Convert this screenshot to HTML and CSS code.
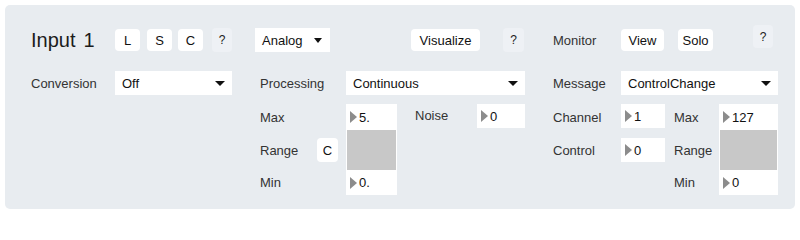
FILE: index.html
```html
<!DOCTYPE html>
<html>
<head>
<meta charset="utf-8">
<link rel="stylesheet" href="styles.css">
</head>
<body>
<div class="panel">
  <div class="sec sec-a">
    <div class="head">
      <div class="title"><span>Input</span><span class="title-num">1</span></div>
      <div class="btn btn-l">L</div>
      <div class="btn btn-s">S</div>
      <div class="btn btn-c">C</div>
      <div class="help help-a">?</div>
    </div>
    <div class="line line-a">
      <div class="label">Conversion</div>
      <div class="dd"><span>Off</span><i class="arrow"></i></div>
    </div>
  </div>

  <div class="sec sec-b">
    <div class="head head-b">
      <div class="dd dd-analog"><span>Analog</span><i class="arrow"></i></div>
      <div class="spacer"></div>
      <div class="btn btn-vis">Visualize</div>
      <div class="help help-b">?</div>
    </div>
    <div class="line line-b">
      <div class="label pl5">Processing</div>
      <div class="dd"><span>Continuous</span><i class="arrow"></i></div>
    </div>
    <div class="params params-b">
      <div class="label pl5 r3 c1">Max</div>
      <div class="label pl5 r4 c1">Range</div>
      <div class="label pl5 r5 c1">Min</div>
      <div class="btn btn-rc r4 c2">C</div>
      <div class="range c3">
        <div class="num">5.</div>
        <div class="gray"></div>
        <div class="num">0.</div>
      </div>
      <div class="label noise r3 c4">Noise</div>
      <div class="num box r3 c5">0</div>
    </div>
  </div>

  <div class="sec sec-c">
    <div class="head">
      <div class="label mon">Monitor</div>
      <div class="btn btn-view">View</div>
      <div class="btn btn-solo">Solo</div>
      <div class="help help-c">?</div>
    </div>
    <div class="line line-c">
      <div class="label">Message</div>
      <div class="dd"><span>ControlChange</span><i class="arrow"></i></div>
    </div>
    <div class="params params-c">
      <div class="label r3 c1">Channel</div>
      <div class="num box r3 c2">1</div>
      <div class="label r4 c1">Control</div>
      <div class="num box mid r4 c2">0</div>
      <div class="label pl9 r3 c3">Max</div>
      <div class="label pl9 r4 c3">Range</div>
      <div class="label pl9 r5 c3">Min</div>
      <div class="range c4">
        <div class="num">127</div>
        <div class="gray"></div>
        <div class="num">0</div>
      </div>
    </div>
  </div>
</div>
</body>
</html>
```

FILE: styles.css
```css
html, body {
  margin: 0;
  padding: 0;
  background: #ffffff;
}

body {
  font-family: "Liberation Sans", Arial, Helvetica, sans-serif;
  font-size: 13px;
  color: #222;
}

.panel {
  margin: 5px;
  width: 790px;
  height: 204px;
  box-sizing: border-box;
  padding: 23px 0 0 26px;
  background: #e8ecf0;
  border-radius: 5px;
  display: flex;
  align-items: flex-start;
}

.sec {
  display: flex;
  flex-direction: column;
}

.sec-a { width: 224px; }
.sec-b { width: 298px; }
.sec-c { width: 226px; }

.head {
  display: flex;
  align-items: center;
  height: 24px;
}

.head-b { width: 269px; }

.title {
  width: 84px;
  font-size: 20px;
  color: #1c1c1c;
  display: flex;
  align-items: center;
  height: 24px;
}

.title-num {
  margin-left: 8px;
}

.btn {
  background: #ffffff;
  border-radius: 4px;
  height: 22px;
  display: flex;
  align-items: center;
  justify-content: center;
  color: #111;
  box-sizing: border-box;
}

.btn-l { width: 25px; }
.btn-s { width: 25px; margin-left: 7px; }
.btn-c { width: 25px; margin-left: 6px; }

.help {
  background: #eef1f5;
  border-radius: 4px;
  width: 20px;
  height: 24px;
  display: flex;
  align-items: center;
  justify-content: center;
  color: #222;
  font-size: 12px;
}

.help-a { margin-left: 9px; }

.line {
  margin-top: 19px;
  display: grid;
  align-items: center;
  height: 24px;
}

.line-a { grid-template-columns: 84px 117px; }
.line-b { grid-template-columns: 91px 179px; }
.line-c { grid-template-columns: 68px 157px; }

.label {
  color: #333;
  white-space: nowrap;
}

.pl5 { padding-left: 5px; }
.pl9 { padding-left: 9px; }

.dd {
  background: #ffffff;
  height: 24px;
  display: flex;
  align-items: center;
  justify-content: space-between;
  padding-left: 7px;
  box-sizing: border-box;
  color: #111;
}

.arrow {
  width: 0;
  height: 0;
  border-left: 5px solid transparent;
  border-right: 5px solid transparent;
  border-top: 5px solid #111;
  margin-right: 7px;
}

.dd-analog {
  width: 75px;
}

.dd-analog .arrow {
  border-left-width: 4px;
  border-right-width: 4px;
  margin-right: 8px;
}

.spacer { flex: 1; }

.btn-vis { width: 69px; }
.help-b { margin-left: 23px; width: 21px; }

.mon { width: 68px; }
.btn-view { width: 43px; }
.btn-solo { width: 35px; margin-left: 14px; }
.help-c {
  margin-left: 40px;
  height: 23px;
  align-self: flex-start;
  margin-top: -3px;
}

.params {
  margin-top: 9px;
  display: grid;
  grid-template-rows: 26px 40px 25px;
  align-items: center;
}

.params-b { grid-template-columns: 62px 29px 51px 80px 48px; }
.params-c { grid-template-columns: 68px 44px 54px 59px; }

.r3 { grid-row: 1; }
.r4 { grid-row: 2; }
.r5 { grid-row: 3; }
.c1 { grid-column: 1; }
.c2 { grid-column: 2; }
.c3 { grid-column: 3; }
.c4 { grid-column: 4; }
.c5 { grid-column: 5; }

.noise { padding-left: 18px; align-self: start; margin-top: 4px; }

.btn-rc {
  width: 21px;
  height: 24px;
  justify-self: start;
}

.num {
  display: flex;
  align-items: center;
  padding-left: 4px;
  color: #111;
}

.num::before {
  content: "";
  width: 0;
  height: 0;
  border-left: 7px solid #8c8c8c;
  border-top: 6px solid transparent;
  border-bottom: 6px solid transparent;
  margin-right: 2px;
}

.box {
  background: #ffffff;
  height: 24px;
  align-self: start;
}

.box.mid {
  align-self: center;
}

.range {
  grid-row: 1 / 4;
  align-self: stretch;
  background: #ffffff;
  display: grid;
  grid-template-rows: 26px 40px 25px;
}

.range .gray {
  background: #c8c8c8;
  margin: 0 1px;
}
```
